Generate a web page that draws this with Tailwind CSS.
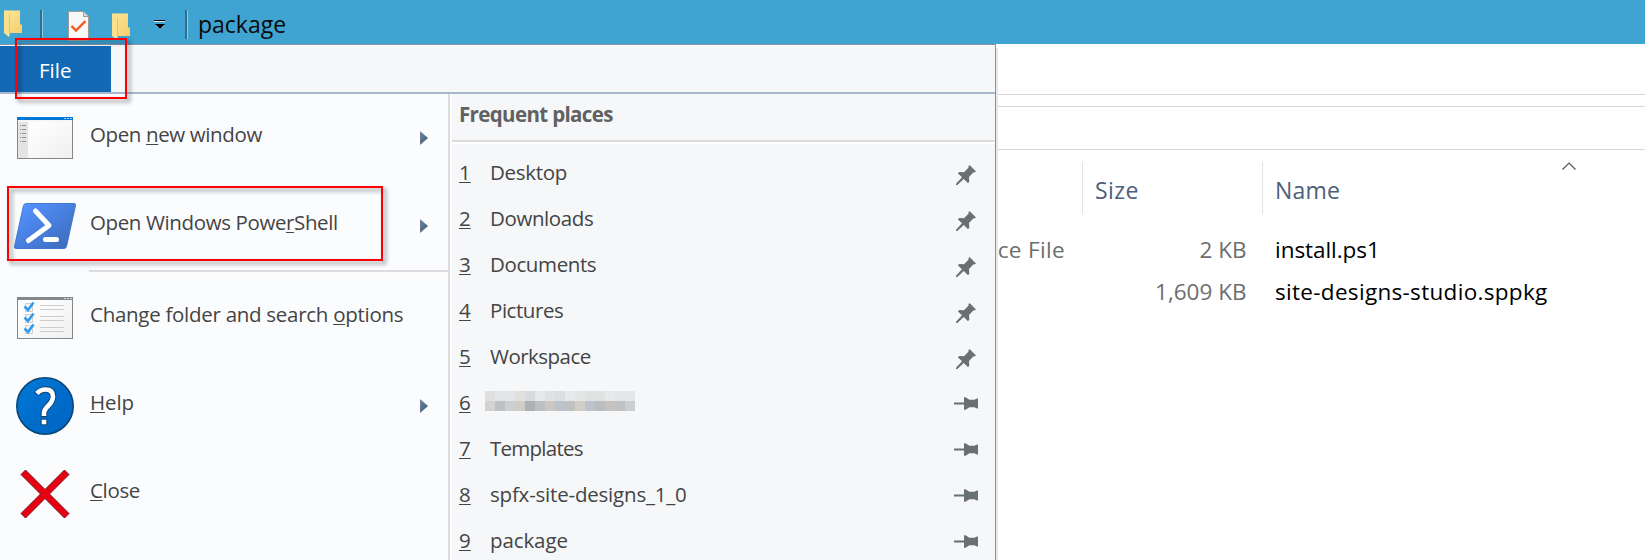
<!DOCTYPE html>
<html lang="en">
<head>
<meta charset="utf-8">
<title>package</title>
<script src="https://cdn.jsdelivr.net/npm/@tailwindcss/browser@4"></script>
</head>
<body class="relative flex h-[560px] w-[1645px] flex-col overflow-hidden bg-white font-['Open_Sans','Noto_Sans',sans-serif] text-[20.5px] text-[#444]">

<svg class="absolute h-0 w-0">
  <defs>
    <linearGradient id="fold" x1="0" y1="0" x2="1" y2="1"><stop offset="0" stop-color="#ffe79a"/><stop offset="1" stop-color="#f3cd6b"/></linearGradient>
    <linearGradient id="ps" x1="0" y1="0" x2="1" y2="1"><stop offset="0.1" stop-color="#5391fe"/><stop offset="0.9" stop-color="#3e6dbf"/></linearGradient>
    <linearGradient id="win" x1="0" y1="0" x2="1" y2="1"><stop offset="0.3" stop-color="#fdfdfd"/><stop offset="1" stop-color="#efefef"/></linearGradient>
    <linearGradient id="help" x1="0" y1="0" x2="1" y2="1"><stop offset="0" stop-color="#0078d7"/><stop offset="1" stop-color="#0063c0"/></linearGradient>
    <linearGradient id="arr" x1="0" y1="0" x2="1" y2="1"><stop offset="0" stop-color="#7388a3"/><stop offset="1" stop-color="#3c5373"/></linearGradient>
    <symbol id="folder" viewBox="0 0 18 27">
      <path d="M1 .5H16V14l2 1v8H1z" fill="url(#fold)"/>
      <path d="M0 0L6 4.500V24L5 27L0 23z" fill="#fbe08d"/>
      <path d="M5.500 4.500V25" stroke="#e3b95a" stroke-width=".8"/>
    </symbol>
    <symbol id="arrow" viewBox="0 0 8 14"><path d="M0 0L8 7L0 14z" fill="url(#arr)"/></symbol>
    <symbol id="pinned" viewBox="0 0 20 20">
      <path d="M13.500 0L20 6.500L18.300 7.500L17.500 7.300L13 12L13.300 17L11.800 18L7.800 14L1.300 20H0V18.700L6 12.200L2 8.500L3 7L8 7.200L12.600 2.600L12.400 1.500z" fill="#687073"/>
    </symbol>
    <symbol id="unpinned" viewBox="0 0 24 13">
      <path d="M0 5.500H10V0.300H11.500L15.500 2.800H20.500L23 1.500H24V11.500H23L20.500 10.300H15.500L11.500 12.700H10V7.500H0z" fill="#687073"/>
    </symbol>
  </defs>
</svg>

<header class="flex h-[44px] shrink-0 items-center bg-[#3fa4d1]">
  <svg class="ml-[4px] h-[27px] w-[18px] mt-[3px]"><use href="#folder"/></svg>
  <div class="ml-[18px] mt-[4px] h-[29px] w-[3px] border-r border-[#8fc8e2] bg-[#2f6f8d]"></div>
  <svg class="ml-[25px] mt-[8px] h-[30px] w-[21px]" viewBox="0 0 21 30">
    <path d="M.5 .5H15.500L20.500 5.500V29.500H.5z" fill="#f8f8f8" stroke="#9b9b9b"/>
    <path d="M15.500 .5V5.500H20.500" fill="#dcdcdc" stroke="#9b9b9b"/>
    <path d="M3.500 15L8 19.500L17.500 10" fill="none" stroke="#f2581c" stroke-width="2.400"/>
  </svg>
  <svg class="ml-[23px] mt-[8px] h-[27px] w-[18px]"><use href="#folder"/></svg>
  <svg class="ml-[24px] mt-[5px] h-[10px] w-[12px]" viewBox="0 0 12 10"><path d="M0 0H11V1H0z" fill="#000"/><path d="M0 1H11V2H0z" fill="#cfe8f3"/><path d="M1 4H11L6 9z" fill="#000"/><path d="M1.500 5L6 9.500L10.500 5" fill="none" stroke="#b9dcec" stroke-width=".5"/></svg>
  <div class="ml-[19px] mt-[4px] h-[29px] w-[3px] border-r border-[#8fc8e2] bg-[#2f6f8d]"></div>
  <div class="ml-[10px] mt-[3px] text-[23px] leading-[30px] text-[#0a0a0a]">package</div>
</header>

<main class="flex min-h-0 flex-1">
  <section class="relative z-10 flex w-[996px] shrink-0 flex-col border-t border-r border-[#8592a6] bg-[#f5f7f9] shadow-[2px_4px_0_#e8e8e8]">
    <div class="flex h-[49px] shrink-0 border-t border-b-2 border-t-white border-b-[#a8b7cb]">
      <div class="w-[111px] bg-[#1369b4] pl-[39px] text-[20.500px] leading-[49px] text-white">File</div>
    </div>
    <div class="flex min-h-0 flex-1">
      <nav class="w-[450px] shrink-0 border-r-2 border-[#dcdcde] bg-[#fbfcfe]">
        <div class="flex h-[88px] items-center pl-[17px] pr-[20px]">
          <svg class="h-[42px] w-[56px]" viewBox="0 0 56 42">
            <rect x=".5" y=".5" width="55" height="41" fill="url(#win)" stroke="#85888b"/>
            <path d="M1 5H11V41H1z" fill="#e4e4e4"/><path d="M0 0H56V3H0z" fill="#0078d7"/><path d="M1 3H55V5H1z" fill="#f6f6f6"/>
            <path d="M47 1.500H49M50 1.500H52M53 1.500H55" stroke="#9fd0f5"/>
            <path d="M3 8.500H4M5 8.500H9M3 12.500H4M5 12.500H9M3 16.500H4M5 16.500H9M3 20.500H4M5 20.500H9M3 24.500H4M5 24.500H9" stroke="#8f8f8f"/>
          </svg>
          <span class="-mt-[8px] ml-[17px] flex-1 tracking-[-0.38px] whitespace-nowrap">Open <u class="decoration-1 underline-offset-2">n</u>ew window</span>
          <svg class="h-[14px] w-[8px]"><use href="#arrow"/></svg>
        </div>
        <div class="flex h-[88px] items-center pl-[14px] pr-[20px]">
          <svg class="h-[46px] w-[62px]" viewBox="0 0 62 46">
            <path d="M12.500 .5H60Q62 .5 61.500 2.500L52.500 43.500Q52 45.500 50 45.500H2Q0 45.500 .5 43.500L9.500 2.500Q10 .5 12.500 .5z" fill="url(#ps)" stroke="#3f78cf"/>
            <path d="M21.500 8L35 22.500L14.500 37.500" fill="none" stroke="#fff" stroke-width="5" stroke-linecap="round" stroke-linejoin="round"/>
            <path d="M31.500 36.500H42.500" stroke="#fff" stroke-width="5" stroke-linecap="round"/>
          </svg>
          <span class="-mt-[8px] ml-[14px] flex-1 tracking-[-0.38px] whitespace-nowrap">Open Windows Powe<u class="decoration-1 underline-offset-2">r</u>Shell</span>
          <svg class="h-[14px] w-[8px]"><use href="#arrow"/></svg>
        </div>
        <div class="ml-[89px] h-[4px] border-t-2 border-[#dcdcde] bg-[#fdfdfe]"></div>
        <div class="flex h-[88px] items-center pl-[17px] pr-[20px]">
          <svg class="h-[42px] w-[56px]" viewBox="0 0 56 42">
            <rect x=".5" y=".5" width="55" height="41" fill="url(#win)" stroke="#85888b"/>
            <path d="M0 0H56V3H0z" fill="#85888b"/><path d="M47 1.500H49M50 1.500H52M53 1.500H55" stroke="#d8d8d8"/>
            <path d="M8.500 6.500h7v8h-7zM8.500 17.500h7v8h-7zM8.500 28.500h7v8h-7z" fill="#f4f4f4" stroke="#cfcfcf"/>
            <path d="M23 8.500H47M23 12.500H47M23 19.500H47M23 23.500H47M23 30.500H47M23 34.500H47" stroke="#cbcdce"/>
            <path d="M7.500 9.500L11 13L16.500 5.500M7.500 20.500L11 24L16.500 16.500M7.500 31.500L11 35L16.500 27.500" fill="none" stroke="#2e9bf0" stroke-width="2.500"/>
          </svg>
          <span class="-mt-[8px] ml-[17px] flex-1 tracking-[-0.28px] whitespace-nowrap">Change folder and search <u class="decoration-1 underline-offset-2">o</u>ptions</span>
        </div>
        <div class="flex h-[88px] items-center pl-[16px] pr-[20px]">
          <svg class="h-[58px] w-[58px]" viewBox="0 0 58 58">
            <circle cx="29" cy="29" r="28.200" fill="url(#help)" stroke="#0c4677" stroke-width="1.600"/>
            <g fill="none" stroke-linejoin="miter">
              <path d="M21 17.500Q23.500 12.500 29.500 12.500Q37 12.500 37 19.500Q37 24 32.500 28.500Q28 33 28 36V40" stroke="#0c4677" stroke-width="6.600"/>
              <path d="M24.700 41.700H31.300V48.300H24.700z" fill="#0c4677"/>
              <path d="M21 16.500Q24 12.500 29.500 12.500Q37 12.500 37 19.500Q37 24 32.500 28.500Q28 33 28 36V39" stroke="#fff" stroke-width="4.600"/>
              <path d="M25.700 42.700H30.300V47.300H25.700z" fill="#fff"/>
            </g>
          </svg>
          <span class="-mt-[8px] ml-[16px] flex-1 tracking-[-0.1px] whitespace-nowrap"><u class="decoration-1 underline-offset-2">H</u>elp</span>
          <svg class="h-[14px] w-[8px]"><use href="#arrow"/></svg>
        </div>
        <div class="flex h-[88px] items-center pl-[20px] pr-[20px]">
          <svg class="h-[50px] w-[50px]" viewBox="0 0 50 50">
            <path d="M5.500 1L25 20.500L44.500 1L49 5.500L29.500 25L49 44.500L44.500 49L25 29.500L5.500 49L1 44.500L20.500 25L1 5.500z" fill="#e60012" stroke="#7c1018"/>
          </svg>
          <span class="-mt-[8px] ml-[20px] flex-1 tracking-[-0.35px] whitespace-nowrap"><u class="decoration-1 underline-offset-2">C</u>lose</span>
        </div>
      </nav>

      <div class="flex flex-1 flex-col border-l-2 border-[#fcfcfd]">
        <h2 class="h-[46px] shrink-0 pl-[7px] text-[20.500px] leading-[41px] font-bold tracking-[-0.64px] text-[#616161]">Frequent places</h2>
        <div class="h-[4px] shrink-0 border-t-2 border-b-2 border-t-[#dcdcde] border-b-white"></div>
        <ul class="pt-[8px]">
          <li class="flex h-[46px] items-center pl-[7px] pr-[19px]"><u class="-mt-[6px] w-[31px] decoration-1 underline-offset-2">1</u><span class="-mt-[6px] flex-1 tracking-[-0.3px]">Desktop</span><svg class="h-[20px] w-[20px]"><use href="#pinned"/></svg></li>
          <li class="flex h-[46px] items-center pl-[7px] pr-[19px]"><u class="-mt-[6px] w-[31px] decoration-1 underline-offset-2">2</u><span class="-mt-[6px] flex-1 tracking-[-0.4px]">Downloads</span><svg class="h-[20px] w-[20px]"><use href="#pinned"/></svg></li>
          <li class="flex h-[46px] items-center pl-[7px] pr-[19px]"><u class="-mt-[6px] w-[31px] decoration-1 underline-offset-2">3</u><span class="-mt-[6px] flex-1 tracking-[-0.39px]">Documents</span><svg class="h-[20px] w-[20px]"><use href="#pinned"/></svg></li>
          <li class="flex h-[46px] items-center pl-[7px] pr-[19px]"><u class="-mt-[6px] w-[31px] decoration-1 underline-offset-2">4</u><span class="-mt-[6px] flex-1 tracking-[-0.45px]">Pictures</span><svg class="h-[20px] w-[20px]"><use href="#pinned"/></svg></li>
          <li class="flex h-[46px] items-center pl-[7px] pr-[19px]"><u class="-mt-[6px] w-[31px] decoration-1 underline-offset-2">5</u><span class="-mt-[6px] flex-1 tracking-[-0.52px]">Workspace</span><svg class="h-[20px] w-[20px]"><use href="#pinned"/></svg></li>
          <li class="flex h-[46px] items-center pl-[7px] pr-[17px]"><u class="-mt-[6px] w-[26px] decoration-1 underline-offset-2">6</u>
            <svg class="-mt-[8px] h-[20px] w-[150px]" viewBox="0 0 150 20" shape-rendering="crispEdges">
              <path d="M0 0h10v10H0z" fill="#dfdfdf"/><path d="M10 0h20v10H10z" fill="#e4e5e7"/><path d="M30 0h10v10H30z" fill="#e2e0dd"/><path d="M40 0h10v10H40z" fill="#d7dbde"/><path d="M50 0h10v10H50z" fill="#e8e8e8"/><path d="M60 0h10v10H60z" fill="#dfe1e2"/><path d="M70 0h10v10H70z" fill="#dcdee0"/><path d="M80 0h10v10H80z" fill="#e7e8eb"/><path d="M90 0h10v10H90z" fill="#e3e5e7"/><path d="M100 0h20v10H100z" fill="#e0e1e1"/><path d="M120 0h10v10H120z" fill="#e8e9eb"/><path d="M130 0h20v10H130z" fill="#e5e6e7"/>
              <path d="M0 10h10v10H0z" fill="#d5d3d1"/><path d="M10 10h10v10H10z" fill="#bfc0c2"/><path d="M20 10h10v10H20z" fill="#cdcfd2"/><path d="M30 10h10v10H30z" fill="#d0cdc7"/><path d="M40 10h10v10H40z" fill="#adb1b5"/><path d="M50 10h10v10H50z" fill="#bebfc1"/><path d="M60 10h10v10H60z" fill="#cbc7c4"/><path d="M70 10h10v10H70z" fill="#bcc2cc"/><path d="M80 10h10v10H80z" fill="#c1c1c0"/><path d="M90 10h10v10H90z" fill="#d1cdc7"/><path d="M100 10h10v10H100z" fill="#bdc3cd"/><path d="M110 10h10v10H110z" fill="#bcbebd"/><path d="M120 10h10v10H120z" fill="#c6c2bf"/><path d="M130 10h10v10H130z" fill="#c1c2c4"/><path d="M140 10h10v10H140z" fill="#cccfd1"/>
            </svg>
            <svg class="-mt-[3px] ml-auto h-[13px] w-[24px]"><use href="#unpinned"/></svg></li>
          <li class="flex h-[46px] items-center pl-[7px] pr-[17px]"><u class="-mt-[6px] w-[31px] decoration-1 underline-offset-2">7</u><span class="-mt-[6px] flex-1 tracking-[-0.75px]">Templates</span><svg class="-mt-[3px] h-[13px] w-[24px]"><use href="#unpinned"/></svg></li>
          <li class="flex h-[46px] items-center pl-[7px] pr-[17px]"><u class="-mt-[6px] w-[31px] decoration-1 underline-offset-2">8</u><span class="-mt-[6px] flex-1 tracking-[-0.2px]">spfx-site-designs_1_0</span><svg class="-mt-[3px] h-[13px] w-[24px]"><use href="#unpinned"/></svg></li>
          <li class="flex h-[46px] items-center pl-[7px] pr-[17px]"><u class="-mt-[6px] w-[31px] decoration-1 underline-offset-2">9</u><span class="-mt-[6px] flex-1 tracking-[-0.1px]">package</span><svg class="-mt-[3px] h-[13px] w-[24px]"><use href="#unpinned"/></svg></li>
        </ul>
      </div>
    </div>
  </section>

  <section class="flex flex-1 flex-col text-[22.500px]">
    <div class="h-[51px] shrink-0 border-b border-[#d9d9d9]"></div>
    <div class="h-[12px] shrink-0 border-b border-[#d9d9d9]"></div>
    <div class="h-[43px] shrink-0 border-b border-[#d9d9d9]"></div>
    <div class="mt-[12px] flex h-[52px] text-[23px] leading-[56px] text-[#4c607a]">
      <div class="w-[86px]"></div>
      <div class="w-[180px] border-l border-[#e2e2e2] pl-[12px] tracking-[0.4px]">Size</div>
      <div class="flex flex-1 border-l border-[#e2e2e2] pl-[12px] tracking-[0.2px]">Name
        <svg class="ml-[221.500px] h-[9px] w-[14px]" viewBox="0 0 14 9"><path d="M.5 7.500L7 1L13.500 7.500" fill="none" stroke="#555" stroke-width="1.200"/></svg>
      </div>
    </div>
    <div class="mt-[15px] flex h-[42px] leading-[42px] text-[#6d6d6d]">
      <div class="flex w-[69px] justify-end overflow-hidden whitespace-nowrap tracking-[0.35px]">Source File</div>
      <div class="w-[181.500px] text-right">2 KB</div>
      <div class="ml-[28.500px] tracking-[-0.05px] text-black">install.ps1</div>
    </div>
    <div class="flex h-[42px] leading-[42px] text-[#6d6d6d]">
      <div class="w-[69px]"></div>
      <div class="w-[181.500px] text-right">1,609 KB</div>
      <div class="ml-[28.500px] tracking-[0.31px] text-black">site-designs-studio.sppkg</div>
    </div>
  </section>
</main>

<div class="absolute top-[38px] left-[15px] z-20 h-[61px] w-[112px] border-2 border-[#fb0007] drop-shadow-[3px_3px_2px_rgba(0,0,0,0.45)]"></div>
<div class="absolute top-[186px] left-[7px] z-20 h-[75px] w-[376px] border-2 border-[#fb0007] drop-shadow-[3px_3px_2px_rgba(0,0,0,0.45)]"></div>
</body>
</html>
